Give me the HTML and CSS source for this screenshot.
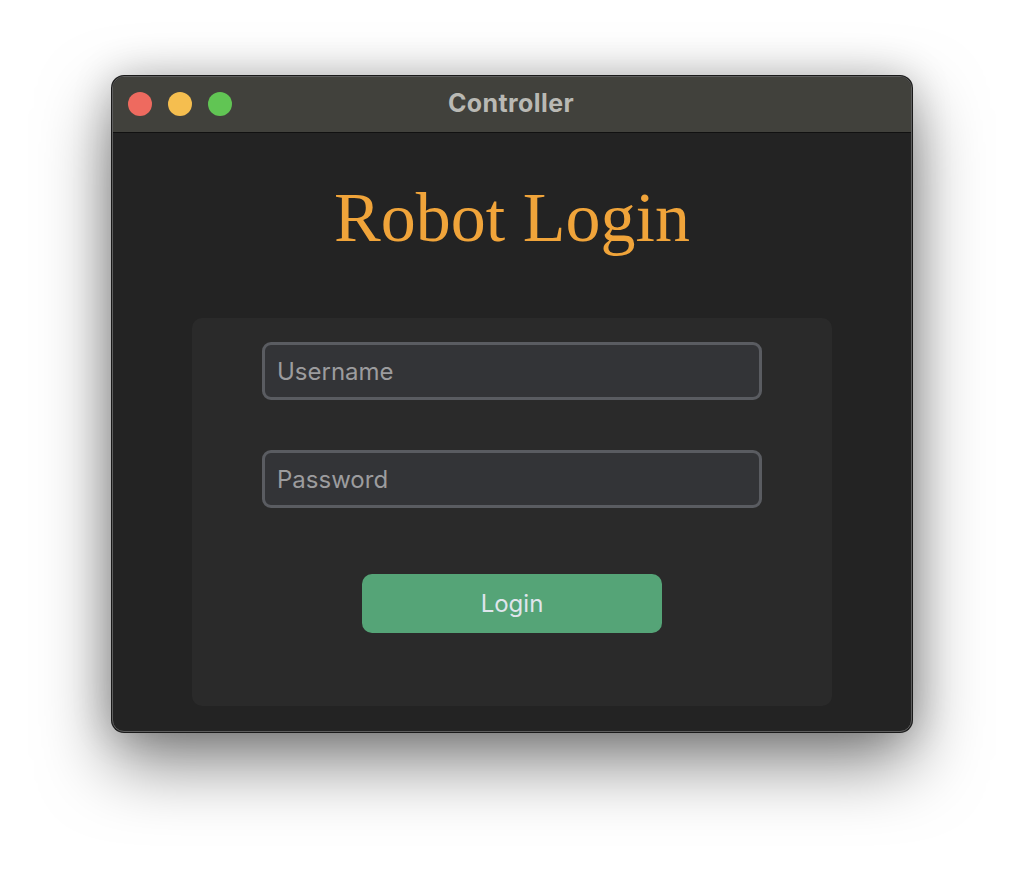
FILE: index.html
```html
<!DOCTYPE html>
<html lang="en">
<head>
<meta charset="utf-8">
<title>Controller</title>
<link rel="stylesheet" href="styles.css">
</head>
<body>
<div class="stage">
  <div class="window">
    <div class="titlebar">
      <div class="lights">
        <span class="light red"></span>
        <span class="light yellow"></span>
        <span class="light green"></span>
      </div>
      <div class="title">Controller</div>
    </div>
    <div class="content">
      <h1 class="heading">Robot Login</h1>
      <div class="panel">
        <input class="field" type="text" placeholder="Username">
        <input class="field" type="password" placeholder="Password">
        <button class="login" type="button">Login</button>
      </div>
    </div>
  </div>
</div>
</body>
</html>
```

FILE: styles.css
```css
html, body {
  margin: 0;
  padding: 0;
  background: #ffffff;
}
body {
  width: 1024px;
  height: 880px;
  overflow: hidden;
  font-family: Inter, "Noto Sans", "Liberation Sans", sans-serif;
}
.stage {
  display: flex;
  justify-content: center;
  padding-top: 76px;
}
.window {
  width: 800px;
  height: 656px;
  box-sizing: border-box;
  border-radius: 12px;
  background: #232323;
  border: 1px solid #5e5e5e;
  box-shadow: 0 0 0 1px #1a1a1a, 0 30px 70px rgba(0,0,0,0.5), 0 0 40px rgba(0,0,0,0.2);
  overflow: hidden;
  display: flex;
  flex-direction: column;
}
.titlebar {
  position: relative;
  height: 55px;
  flex: none;
  background: #41413c;
  border-bottom: 1px solid #111111;
  display: flex;
  align-items: center;
  justify-content: center;
}
.lights {
  position: absolute;
  left: 15px;
  top: 15px;
  display: flex;
  gap: 16px;
}
.light {
  width: 24px;
  height: 24px;
  border-radius: 50%;
  display: block;
}
.red { background: #ee6a5f; }
.yellow { background: #f5be4f; }
.green { background: #61c554; }
.title {
  color: #b9b9b4;
  font-size: 25px;
  font-weight: 700;
  letter-spacing: 0.4px;
  margin-top: -3px;
  margin-left: -2px;
}
.content {
  flex: 1;
  display: flex;
  flex-direction: column;
  align-items: center;
}
.heading {
  margin: 49px 0 0;
  font-family: "Liberation Serif", "Times New Roman", serif;
  font-weight: 400;
  font-size: 70px;
  line-height: 72px;
  color: #f0a43a;
}
.panel {
  margin-top: 64px;
  width: 640px;
  height: 388px;
  box-sizing: border-box;
  background: #2a2a2a;
  border-radius: 10px;
  padding-top: 24px;
  display: flex;
  flex-direction: column;
  align-items: center;
}
.field {
  width: 500px;
  height: 58px;
  box-sizing: border-box;
  border: 3px solid #5a5c61;
  border-radius: 9px;
  background: #333437;
  padding: 0 12px;
  font-family: Inter, "Noto Sans", "Liberation Sans", sans-serif;
  font-size: 24px;
  color: #dddddd;
  outline: none;
}
.field::placeholder {
  color: #9c9c9e;
}
.field + .field {
  margin-top: 50px;
}
.login {
  margin-top: 66px;
  width: 300px;
  height: 59px;
  border: none;
  border-radius: 10px;
  background: #55a477;
  color: #dfe5ec;
  font-family: Inter, "Noto Sans", "Liberation Sans", sans-serif;
  font-size: 24px;
  padding: 0;
}
```
